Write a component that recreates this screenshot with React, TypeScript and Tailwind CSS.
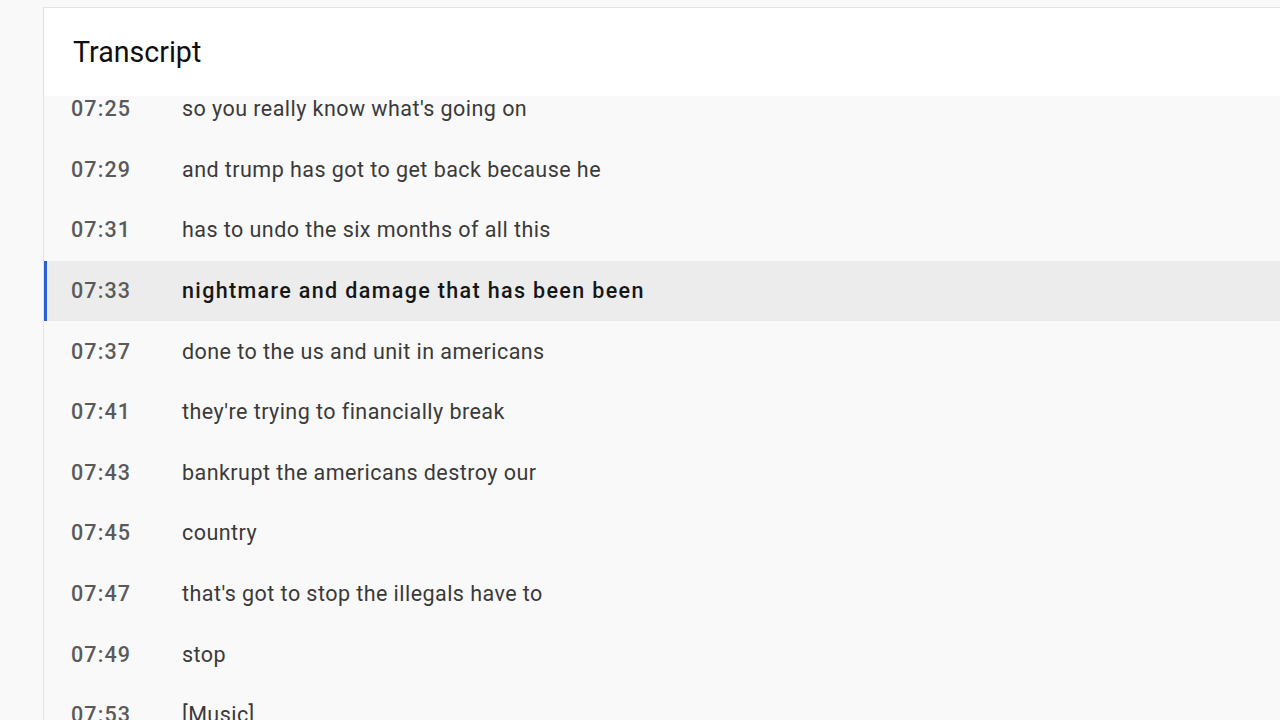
import React from "react";

const rows: { t: string; text: string; active?: boolean }[] = [
  { t: "07:25", text: "so you really know what's going on" },
  { t: "07:29", text: "and trump has got to get back because he" },
  { t: "07:31", text: "has to undo the six months of all this" },
  { t: "07:33", text: "nightmare and damage that has been been", active: true },
  { t: "07:37", text: "done to the us and unit in americans" },
  { t: "07:41", text: "they're trying to financially break" },
  { t: "07:43", text: "bankrupt the americans destroy our" },
  { t: "07:45", text: "country" },
  { t: "07:47", text: "that's got to stop the illegals have to" },
  { t: "07:49", text: "stop" },
  { t: "07:53", text: "[Music]" },
];

export default function App() {
  return (
    <div
      className="h-[720px] w-[1280px] overflow-hidden bg-[#f9f9f9] pt-[7px] pl-[43px]"
      style={{ fontFamily: "Roboto, 'Noto Sans', Arial, sans-serif" }}
    >
      <div className="flex h-full flex-col border-l border-t border-[#e3e3e3] bg-[#f9f9f9]">
        <header className="flex h-[88px] shrink-0 items-center bg-white pl-[29px]">
          <h1 className="text-[28.6px] font-normal leading-none text-[#0f0f0f]">Transcript</h1>
        </header>
        <div className="flex-1 overflow-hidden">
          <div className="-mt-[17px]">
            {rows.map((r) => (
              <div
                key={r.t}
                className={`flex h-[60.6px] items-center ${
                  r.active ? "border-l-[3px] border-[#2a5fd6] bg-[#ececec] pl-[24px]" : "pl-[27px]"
                }`}
              >
                <span className="w-[111px] shrink-0 text-[21.5px] font-medium tracking-[1.1px] text-[#5a5a5a]">
                  {r.t}
                </span>
                <span
                  className={`text-[21.5px] ${
                    r.active
                      ? "font-medium tracking-[1.35px] text-[#161616]"
                      : "font-normal tracking-[0.45px] text-[#3a3a3a]"
                  }`}
                >
                  {r.text}
                </span>
              </div>
            ))}
          </div>
        </div>
      </div>
    </div>
  );
}
